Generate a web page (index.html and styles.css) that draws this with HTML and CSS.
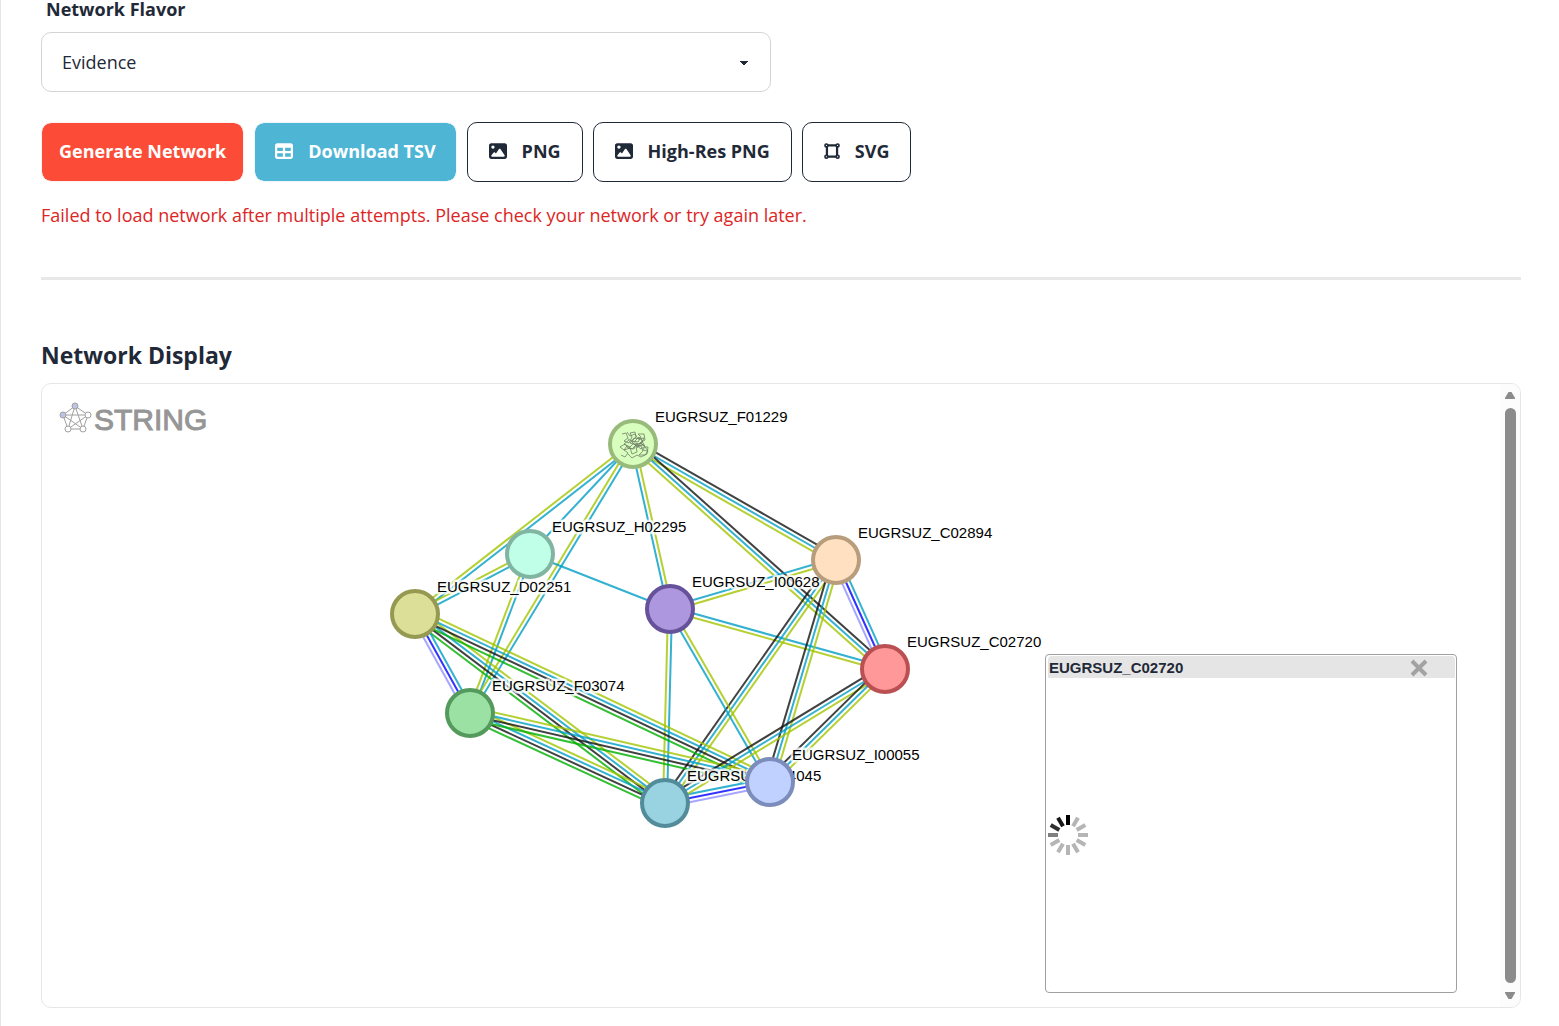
FILE: index.html
```html
<!DOCTYPE html>
<html lang="en">
<head>
<meta charset="UTF-8">
<meta name="viewport" content="width=device-width, initial-scale=1.0">
<title>Protein Interaction Network</title>
<link rel="stylesheet" href="styles.css">
</head>
<body>
<main class="content">
  <form class="network-form">
    <div class="field">
      <label for="flavor">Network Flavor</label>
      <select id="flavor">
        <option value="evidence" selected>Evidence</option>
        <option value="confidence">Confidence</option>
        <option value="actions">Actions</option>
      </select>
    </div>
  </form>

  <div class="actions">
    <button type="button" class="btn btn-primary">Generate Network</button>
    <button type="button" class="btn btn-info">
      <svg class="icon" viewBox="0 0 512 512" aria-hidden="true"><path fill-rule="evenodd" d="M64 256V160H224v96H64zm0 64H224v96H64V320zm224 96V320H448v96H288zM448 256H288V160H448v96zM64 32C28.700 32 0 60.700 0 96V416c0 35.300 28.700 64 64 64H448c35.300 0 64-28.700 64-64V96c0-35.300-28.700-64-64-64H64z"/></svg>
      Download TSV
    </button>
    <button type="button" class="btn btn-outline">
      <svg class="icon" viewBox="0 0 512 512" aria-hidden="true"><use href="#icon-image"/></svg>
      PNG
    </button>
    <button type="button" class="btn btn-outline">
      <svg class="icon" viewBox="0 0 512 512" aria-hidden="true"><use href="#icon-image"/></svg>
      High-Res PNG
    </button>
    <button type="button" class="btn btn-outline">
      <svg class="icon icon-narrow" viewBox="0 0 448 512" aria-hidden="true">
        <path d="M96 96H352M96 416H352M80 112V400M368 112V400" fill="none" stroke="currentColor" stroke-width="64"/>
        <g fill="#fff" stroke="currentColor" stroke-width="48">
          <circle cx="64" cy="96" r="40"/><circle cx="384" cy="96" r="40"/>
          <circle cx="64" cy="416" r="40"/><circle cx="384" cy="416" r="40"/>
        </g>
      </svg>
      SVG
    </button>
  </div>

  <p class="error">Failed to load network after multiple attempts. Please check your network or try again later.</p>

  <hr>

  <h2>Network Display</h2>
  <div class="display">
    <div class="network">
      <svg id="network" class="graph" width="1459" height="623" viewBox="0 0 1459 623">
        <defs>
          <path id="icon-image" fill-rule="evenodd" d="M0 96C0 60.700 28.700 32 64 32H448c35.300 0 64 28.700 64 64V416c0 35.300-28.700 64-64 64H64c-35.300 0-64-28.700-64-64V96zM323.800 202.500c-4.500-6.600-11.900-10.500-19.800-10.500s-15.400 3.900-19.800 10.500l-87 127.600L170.700 297c-4.600-5.700-11.500-9-18.700-9s-14.200 3.300-18.700 9l-64 80c-5.800 7.200-6.900 17.100-2.900 25.400s12.400 13.600 21.600 13.600H424c8.900 0 17.100-4.900 21.200-12.800s3.600-17.400-1.400-24.700l-120-176zM112 192a48 48 0 1 0 0-96 48 48 0 1 0 0 96z"/>
        </defs>
        <g class="logo">
          <path d="M33 22L46 31L41 45H26L21 31ZM33 22L41 45L21 31H46L26 45Z"/>
          <circle class="filled" cx="33" cy="22" r="3"/>
          <circle class="filled" cx="21" cy="31" r="3"/>
          <circle cx="46" cy="31" r="3"/>
          <circle cx="41" cy="45" r="3"/>
          <circle cx="26" cy="45" r="3"/>
          <text x="52" y="46">STRING</text>
        </g>
        <g id="edges"></g>
        <g id="nodes"></g>
        <g class="fold">
          <path d="M580 50l4-1l2 5l-4 3l5 2l3-6l-2-4l5-1l1 5l-4 4l6 1l3-5l-3-3l6 0l1 6l-5 3l5 3l-4 3l-5-4l-4 4l-5-3l-3 4l-4-3l5-3l3 4l6 1l2-5l4 2"/>
          <path d="M579 71l4 2l3-4l-4-3l6-2l2 6l5-2l-1-6l5 0l2 5l-4 4l6 0l3-4l-3-4l3 0l-1 7l-6 3l-4-2l-5 3l-4-4M585 48l3 4l5-2l3 5l6-1l-3 6l-7-1l-4 4l-6-3l5-4M595 64l3-5l5 3l-2 4l4 1"/>
          <path d="M586 55l6 3l5-5l4 4l-6 4l-7-2l4-5l7 1l3 6l-8 1l-5-5"/>
        </g>
      </svg>

      <div class="popup">
        <div class="popup-header">
          <span>EUGRSUZ_C02720</span>
          <button type="button" class="close" aria-label="Close">
            <svg width="18" height="18" viewBox="0 0 18 18"><path d="M2 2L16 16M16 2L2 16"/></svg>
          </button>
        </div>
        <div class="popup-body">
          <svg id="spinner" width="40" height="40" viewBox="-20 -20 40 40" role="img" aria-label="Loading"></svg>
        </div>
      </div>
    </div>
    <div class="scrollbar" aria-hidden="true">
      <span class="arrow-up"></span>
      <span class="thumb"></span>
      <span class="arrow-down"></span>
    </div>
  </div>
</main>
<script src="script.js"></script>
</body>
</html>
```
FILE: styles.css
```css
* {
  box-sizing: border-box;
}

body {
  margin: 0;
  font-family: "Segoe UI", "Open Sans", sans-serif;
  font-size: 18px;
  line-height: 24px;
  color: #1f2937;
  background-color: #fff;
}

.content {
  min-height: 100vh;
  padding: 0 38px 18px 40px;
  border-left: 1px solid #e5e6e6;
}

.network-form {
  display: grid;
  grid-template-columns: 1fr 1fr;
  gap: 20px;
}

.field label {
  display: block;
  height: 32px;
  padding-left: 5px;
  font-weight: 700;
  line-height: 18px;
}

.field select {
  display: block;
  width: 100%;
  height: 60px;
  padding: 0 20px;
  border: 1px solid #d2d4d7;
  border-radius: 10px;
  font: inherit;
  color: inherit;
  appearance: none;
  background-color: #fff;
  background-image:
    linear-gradient(45deg, transparent 50%, #1f2937 50%),
    linear-gradient(135deg, #1f2937 50%, transparent 50%);
  background-position: calc(100% - 26px) 28px, calc(100% - 22px) 28px;
  background-size: 4px 5px;
  background-repeat: no-repeat;
}

.actions {
  display: flex;
  flex-wrap: wrap;
  gap: 10px;
  margin-top: 30px;
}

.btn {
  display: flex;
  align-items: center;
  gap: 15px;
  height: 60px;
  padding: 0 20px 2px;
  border: 1px solid transparent;
  border-radius: 10px;
  background-clip: padding-box;
  font: inherit;
  font-weight: 700;
  color: #1f2937;
  cursor: pointer;
}

.btn-primary {
  padding: 0 17px 2px;
  color: #fff;
  border-color: #fdf3f1;
  background-color: #fc4b37;
}

.btn-info {
  color: #fff;
  border-color: #eff6f9;
  background-color: #4eb5d5;
}

.btn-outline {
  padding: 0 21px 2px;
  border-color: #1f2937;
  background-color: #fff;
}

.icon {
  width: 18px;
  height: 18px;
  fill: currentColor;
}

.icon-narrow {
  width: 16px;
}

.error {
  margin: 21px 0 0;
  color: #dc2626;
}

hr {
  height: 3px;
  margin: 50px 0 60px;
  border: 0;
  background-color: #e8e8e8;
}

h2 {
  margin: 0;
  font-size: 23px;
  line-height: 30px;
}

.display {
  display: flex;
  margin-top: 13px;
  border: 1px solid #e5e6e9;
  border-radius: 10px;
  overflow: hidden;
}

.network {
  position: relative;
  flex: 1;
  min-width: 0;
  overflow: hidden;
  font-family: Arial, "Liberation Sans", sans-serif;
}

.graph {
  display: block;
}

.logo path,
.logo circle {
  fill: none;
  stroke: #a0a0a0;
}

.logo circle {
  fill: #fff;
}

.logo .filled {
  fill: #bcc3e6;
}

.logo text {
  font-size: 30px;
  fill: #969696;
  stroke: #969696;
}

#edges line {
  stroke-width: 2;
  stroke-opacity: 0.8;
}

#nodes circle {
  stroke-width: 4;
}

#nodes text {
  font-size: 15px;
  fill: #000;
  stroke: rgba(255, 255, 255, 0.8);
  stroke-width: 5;
  stroke-linejoin: round;
  paint-order: stroke;
}

.fold path {
  fill: none;
  stroke: #6f7f68;
  stroke-opacity: 0.8;
}

.popup {
  position: absolute;
  top: 270px;
  right: 43px;
  width: 412px;
  padding: 1px 1px 1px 2px;
  border: 1px solid #a0a0a0;
  border-radius: 4px;
  background-color: #fff;
}

.popup-header {
  display: flex;
  align-items: center;
  justify-content: space-between;
  height: 22px;
  padding: 2px 27px 0 1px;
  border-radius: 4px 4px 0 0;
  font-size: 15px;
  font-weight: 700;
  background-color: #e5e5e5;
}

.close {
  display: flex;
  padding: 0;
  border: 0;
  background: none;
  cursor: pointer;
}

.close path {
  stroke: #a2a2a2;
  stroke-width: 4;
}

.popup-body {
  display: flex;
  align-items: center;
  height: 313px;
}

#spinner line {
  stroke-width: 4;
}

.scrollbar {
  display: flex;
  flex-direction: column;
  align-items: center;
  gap: 9px;
  width: 20px;
  padding: 8px 0;
  background-color: #fcfcfc;
}

.thumb {
  flex: 1;
  width: 11px;
  border-radius: 6px;
  background-color: #8b8b8b;
}

.arrow-up,
.arrow-down {
  width: 10px;
  height: 7px;
  background-color: #8b8b8b;
}

.arrow-up {
  clip-path: polygon(35% 0, 65% 0, 100% 85%, 100% 100%, 0 100%, 0 85%);
}

.arrow-down {
  clip-path: polygon(0 0, 100% 0, 100% 15%, 65% 100%, 35% 100%, 0 15%);
}
```
FILE: script.js
```js
const SVG_NS = 'http://www.w3.org/2000/svg';

const nodes = {
  H02295: { x: 488, y: 170, fill: '#c0ffe8', stroke: '#80b5a2' },
  D02251: { x: 373, y: 230, fill: '#dbdf97', stroke: '#959a50' },
  F03074: { x: 428, y: 329, fill: '#9be1a3', stroke: '#559a5d' },
  F01229: { x: 591, y: 60, fill: '#d9ffbf', stroke: '#98bb7c' },
  I00628: { x: 628, y: 225, fill: '#ad97df', stroke: '#66529b' },
  C04045: { x: 623, y: 419, fill: '#99d2e0', stroke: '#528c9b' },
  I00055: { x: 728, y: 398, fill: '#c0d0ff', stroke: '#7c8cbb' },
  C02894: { x: 794, y: 176, fill: '#ffe0c0', stroke: '#b89d7c' },
  C02720: { x: 843, y: 285, fill: '#ff9898', stroke: '#bb5053' }
};

const colors = {
  text: '#a3c400',
  db: '#009dc5',
  coexp: '#111111',
  neighbor: '#00af00',
  cooccur: '#0000ff',
  homology: '#8f8fff'
};

// evidence channels are listed from the left side of the edge to the right
const edges = [
  ['D02251', 'F01229', ['text', 'db']],
  ['H02295', 'F01229', ['db']],
  ['D02251', 'H02295', ['text', 'db']],
  ['F03074', 'H02295', ['text', 'db']],
  ['F03074', 'F01229', ['text', 'db']],
  ['I00628', 'F01229', ['db', 'text']],
  ['H02295', 'I00628', ['db']],
  ['F01229', 'C02894', ['coexp', 'db', 'text']],
  ['F01229', 'C02720', ['coexp', 'db', 'text']],
  ['I00628', 'C02894', ['db', 'text']],
  ['I00628', 'C02720', ['db', 'text']],
  ['C02720', 'C02894', ['homology', 'cooccur', 'db']],
  ['C04045', 'C02894', ['coexp', 'db', 'text']],
  ['I00055', 'C02894', ['coexp', 'db', 'text']],
  ['C04045', 'I00628', ['text', 'db']],
  ['I00055', 'I00628', ['db', 'text']],
  ['D02251', 'C04045', ['text', 'db', 'coexp', 'neighbor']],
  ['D02251', 'I00055', ['text', 'db', 'coexp', 'neighbor']],
  ['F03074', 'D02251', ['homology', 'cooccur', 'db']],
  ['F03074', 'C04045', ['text', 'db', 'coexp', 'neighbor']],
  ['F03074', 'I00055', ['text', 'db', 'coexp', 'neighbor']],
  ['C04045', 'I00055', ['db', 'cooccur', 'homology']],
  ['C04045', 'C02720', ['coexp', 'db', 'text']],
  ['I00055', 'C02720', ['coexp', 'db', 'text']]
];

function add(parent, tag, attrs) {
  const el = document.createElementNS(SVG_NS, tag);
  for (const key in attrs) {
    el.setAttribute(key, attrs[key]);
  }
  parent.appendChild(el);
  return el;
}

function drawEdges() {
  const group = document.getElementById('edges');
  const spacing = 4;
  edges.forEach(([from, to, channels]) => {
    const a = nodes[from];
    const b = nodes[to];
    const length = Math.hypot(b.x - a.x, b.y - a.y);
    const nx = -(b.y - a.y) / length;
    const ny = (b.x - a.x) / length;
    channels.forEach((channel, i) => {
      const offset = (i - (channels.length - 1) / 2) * spacing;
      add(group, 'line', {
        x1: a.x + nx * offset,
        y1: a.y + ny * offset,
        x2: b.x + nx * offset,
        y2: b.y + ny * offset,
        stroke: colors[channel]
      });
    });
  });
}

function drawNodes() {
  const group = document.getElementById('nodes');
  for (const id in nodes) {
    const node = nodes[id];
    add(group, 'circle', { cx: node.x, cy: node.y, r: 23, fill: node.fill, stroke: node.stroke });
    const label = add(group, 'text', { x: node.x + 22, y: node.y - 22 });
    label.textContent = 'EUGRSUZ_' + id;
  }
}

function drawSpinner() {
  const spinner = document.getElementById('spinner');
  const shades = ['#000', '#b5b5b5', '#b5b5b5', '#b5b5b5', '#b5b5b5', '#b5b5b5',
    '#b5b5b5', '#b5b5b5', '#b5b5b5', '#808080', '#303030', '#181818'];
  shades.forEach((shade, i) => {
    add(spinner, 'line', { x1: 0, y1: -10, x2: 0, y2: -20, stroke: shade, transform: `rotate(${i * 30})` });
  });
}

drawEdges();
drawNodes();
drawSpinner();
```
